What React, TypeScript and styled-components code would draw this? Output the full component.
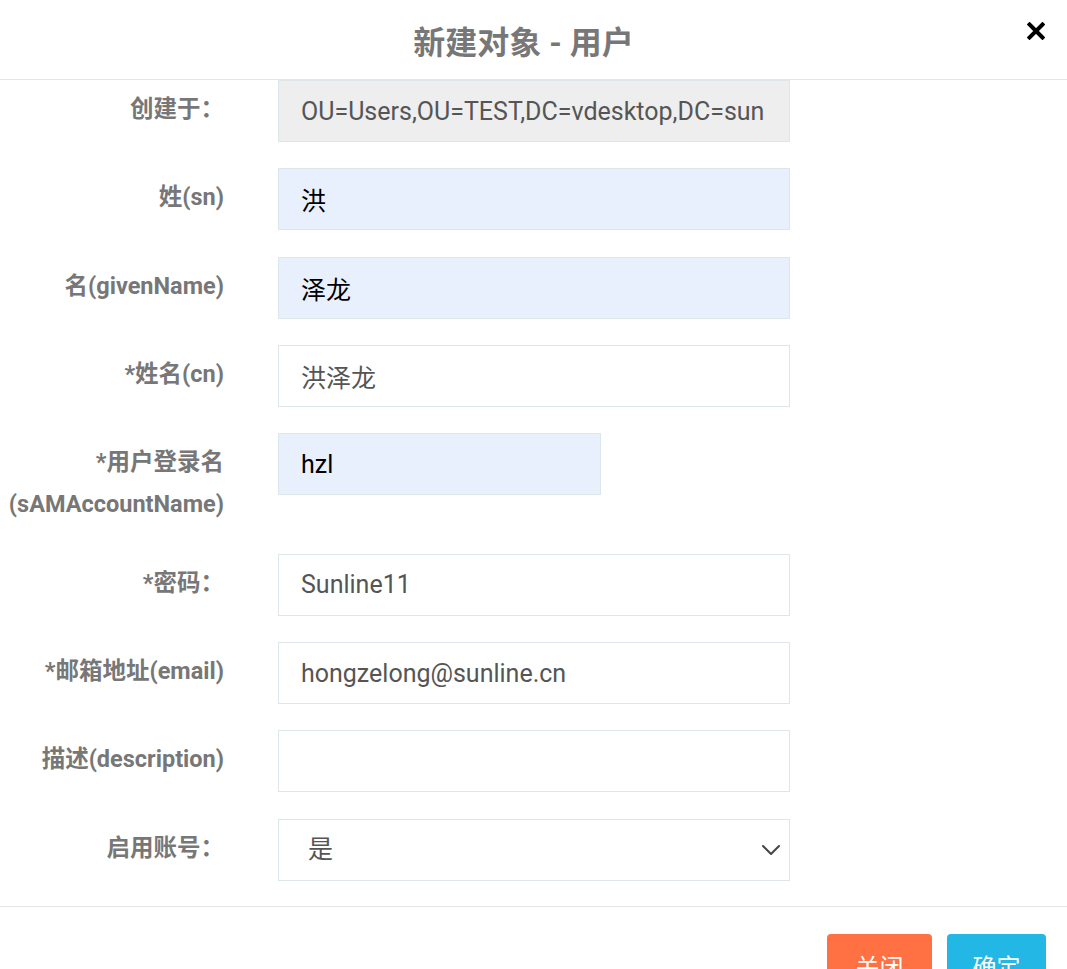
import React from "react";
import styled, { createGlobalStyle } from "styled-components";
import { ChevronDown } from "lucide-react";

const GlobalStyle = createGlobalStyle`
  html, body {
    margin: 0;
    padding: 0;
    background: #fff;
  }
  body {
    font-family: Roboto, "Noto Sans CJK SC", sans-serif;
  }
  * {
    box-sizing: border-box;
  }
`;

const Modal = styled.div`
  width: 1067px;
  height: 969px;
  overflow: hidden;
  background: #fff;
  display: flex;
  flex-direction: column;
`;

const Header = styled.header`
  height: 80px;
  flex-shrink: 0;
  border-bottom: 1px solid #e5e5e5;
  display: flex;
  align-items: center;
  justify-content: center;
  padding-right: 20px;
  position: relative;
`;

const Title = styled.h2`
  margin: 0;
  font-size: 32px;
  font-weight: 700;
  color: #777;
`;

const Close = styled.button`
  position: absolute;
  right: 20px;
  top: 20px;
  width: 22px;
  height: 22px;
  padding: 0;
  border: none;
  background: transparent;
  cursor: pointer;
  display: flex;
  align-items: center;
  justify-content: center;
`;

const Body = styled.div`
  flex-shrink: 0;
  display: flex;
  flex-direction: column;
  gap: 26.25px;
  padding-bottom: 25.5px;
  border-bottom: 1px solid #e5e5e5;
`;

const Row = styled.div`
  display: flex;
  align-items: flex-start;
  gap: 54px;
`;

const Label = styled.label`
  width: 224px;
  flex-shrink: 0;
  text-align: right;
  padding: 8px 0 2.5px;
  font-size: 23.5px;
  line-height: 42px;
  font-weight: 700;
  color: #777;
  white-space: nowrap;
`;

const Input = styled.input<{ $fill?: "auto" | "off"; $w?: number }>`
  width: ${(p) => p.$w ?? 512}px;
  height: 62px;
  padding: 0 22px;
  border: 1px solid #dde6e9;
  border-radius: 0;
  outline: none;
  font-family: Roboto, "Noto Sans CJK SC", sans-serif;
  font-size: 25px;
  color: ${(p) => (p.$fill === "auto" ? "#000" : "#555")};
  background: ${(p) =>
    p.$fill === "auto" ? "#e8f0fe" : p.$fill === "off" ? "#eeeeee" : "#fff"};

  &:disabled {
    color: #555;
    -webkit-text-fill-color: #555;
    opacity: 1;
  }
`;

const SelectWrap = styled.div`
  position: relative;
  width: 512px;
  height: 62px;

  svg {
    position: absolute;
    right: 3px;
    top: 15px;
    pointer-events: none;
  }
`;

const Select = styled.select`
  appearance: none;
  width: 100%;
  height: 100%;
  padding: 0 29px;
  border: 1px solid #dde6e9;
  border-radius: 0;
  background: #fff;
  outline: none;
  font-family: Roboto, "Noto Sans CJK SC", sans-serif;
  font-size: 25px;
  color: #555;
`;

const Footer = styled.footer`
  display: flex;
  justify-content: flex-end;
  gap: 15px;
  padding: 27px 21px 0 0;
`;

const Button = styled.button<{ $tone: "close" | "ok" }>`
  width: ${(p) => (p.$tone === "close" ? 105 : 99)}px;
  height: 62px;
  flex-shrink: 0;
  border: none;
  border-radius: 4px;
  background: ${(p) => (p.$tone === "close" ? "#ff7043" : "#23b7e5")};
  color: #fff;
  font-family: Roboto, "Noto Sans CJK SC", sans-serif;
  font-size: 24px;
  cursor: pointer;
`;

const CloseIcon = () => (
  <svg width="18" height="18" viewBox="0 0 18 18">
    <path
      d="M2.5 2.5 L15.5 15.5 M15.5 2.5 L2.5 15.5"
      stroke="#000"
      strokeWidth="4"
      strokeLinecap="square"
    />
  </svg>
);

const App = () => {
  return (
    <>
      <GlobalStyle />
      <Modal>
        <Header>
          <Title>新建对象 - 用户</Title>
          <Close aria-label="close">
            <CloseIcon />
          </Close>
        </Header>
        <Body>
          <Row>
            <Label>创建于：</Label>
            <Input $fill="off" disabled defaultValue="OU=Users,OU=TEST,DC=vdesktop,DC=sun" />
          </Row>
          <Row>
            <Label>姓(sn)</Label>
            <Input $fill="auto" defaultValue="洪" />
          </Row>
          <Row>
            <Label>名(givenName)</Label>
            <Input $fill="auto" defaultValue="泽龙" />
          </Row>
          <Row>
            <Label>*姓名(cn)</Label>
            <Input defaultValue="洪泽龙" />
          </Row>
          <Row>
            <Label>
              *用户登录名
              <br />
              (sAMAccountName)
            </Label>
            <Input $fill="auto" $w={323} defaultValue="hzl" />
          </Row>
          <Row>
            <Label>*密码：</Label>
            <Input defaultValue="Sunline11" />
          </Row>
          <Row>
            <Label>*邮箱地址(email)</Label>
            <Input defaultValue="hongzelong@sunline.cn" />
          </Row>
          <Row>
            <Label>描述(description)</Label>
            <Input defaultValue="" />
          </Row>
          <Row>
            <Label>启用账号：</Label>
            <SelectWrap>
              <Select defaultValue="1">
                <option value="1">是</option>
                <option value="0">否</option>
              </Select>
              <ChevronDown size={32} color="#444" strokeWidth={1.5} />
            </SelectWrap>
          </Row>
        </Body>
        <Footer>
          <Button $tone="close">关闭</Button>
          <Button $tone="ok">确定</Button>
        </Footer>
      </Modal>
    </>
  );
};

export default App;
